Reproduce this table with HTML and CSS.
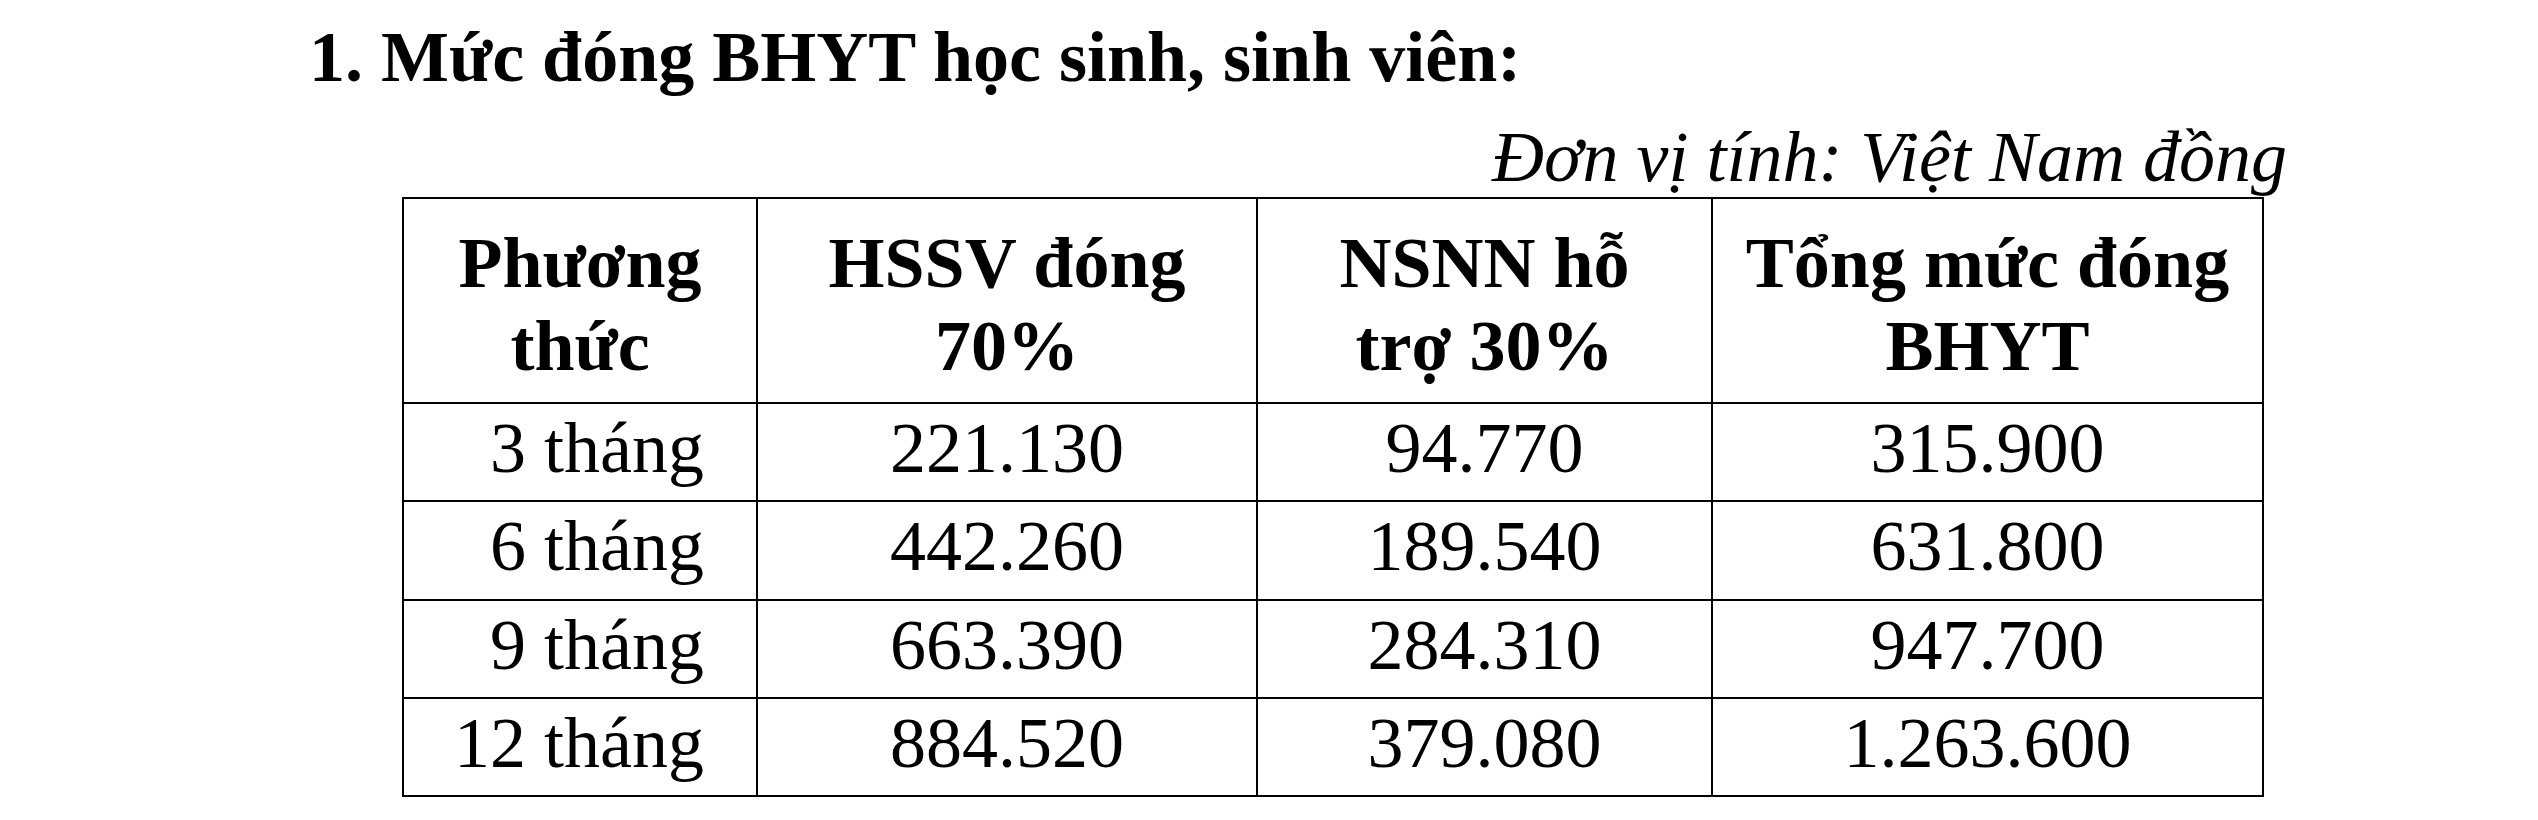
FILE: index.html
```html
<!DOCTYPE html>
<html lang="vi">
<head>
<meta charset="utf-8">
<title>Mức đóng BHYT học sinh, sinh viên</title>
<link rel="stylesheet" href="styles.css">
</head>
<body>
<div class="page">
  <h1 class="title">1. Mức đóng BHYT học sinh, sinh viên:</h1>
  <p class="unit">Đơn vị tính: Việt Nam đồng</p>
  <table class="fees">
    <colgroup>
      <col class="c1"><col class="c2"><col class="c3"><col class="c4">
    </colgroup>
    <thead>
      <tr>
        <th>Phương<br>thức</th>
        <th>HSSV đóng<br>70%</th>
        <th>NSNN hỗ<br>trợ 30%</th>
        <th>Tổng mức đóng<br>BHYT</th>
      </tr>
    </thead>
    <tbody>
      <tr><td class="term">3 tháng</td><td>221.130</td><td>94.770</td><td>315.900</td></tr>
      <tr><td class="term">6 tháng</td><td>442.260</td><td>189.540</td><td>631.800</td></tr>
      <tr><td class="term">9 tháng</td><td>663.390</td><td>284.310</td><td>947.700</td></tr>
      <tr><td class="term">12 tháng</td><td>884.520</td><td>379.080</td><td>1.263.600</td></tr>
    </tbody>
  </table>
</div>
</body>
</html>
```
FILE: styles.css
```css
html, body {
  margin: 0;
  padding: 0;
  background: #fff;
  color: #000;
}

.page {
  padding-top: 16px;
  font-family: "Liberation Serif", "Times New Roman", serif;
  font-size: 72px;
  line-height: normal;
}

.title {
  margin: 0 0 0 309px;
  font-size: 72px;
  font-weight: bold;
  line-height: normal;
}

.unit {
  margin: 17px 0 -2px 0;
  width: 2287px;
  text-align: right;
  font-style: italic;
  line-height: normal;
}

.fees {
  margin-left: 402px;
  border-collapse: collapse;
  table-layout: fixed;
  width: 1862px;
}

.c1 { width: 354px; }
.c2 { width: 500px; }
.c3 { width: 455px; }
.c4 { width: 551px; }

.fees th,
.fees td {
  border: 2px solid #000;
  padding: 0;
  text-align: center;
  vertical-align: top;
  line-height: normal;
}

.fees th {
  height: 205px;
  padding-top: 23px;
  box-sizing: border-box;
  font-weight: bold;
}

.fees td {
  height: 98.3px;
  padding-top: 3px;
  box-sizing: border-box;
  font-weight: normal;
}

.fees td.term {
  text-align: right;
  padding-right: 52px;
}
```
